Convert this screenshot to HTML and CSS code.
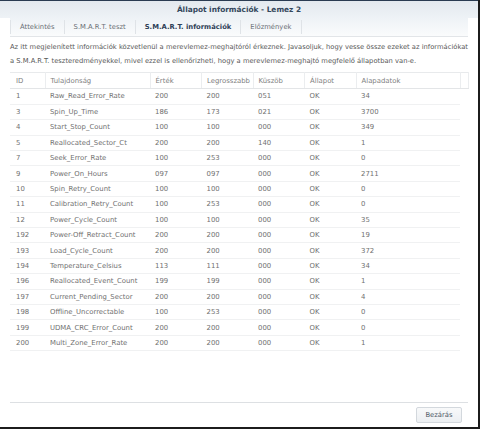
FILE: index.html
```html
<!DOCTYPE html>
<html lang="hu">
<head>
    <meta charset="UTF-8">
    <title>Állapot információk - Lemez 2</title>
    <link rel="stylesheet" href="styles.css">
</head>
<body>
    <div class="window">
        <div class="title-bar">Állapot információk - Lemez 2</div>

        <div class="tabs">
            <span class="tab">Áttekintés</span>
            <span class="tab">S.M.A.R.T. teszt</span>
            <span class="tab active">S.M.A.R.T. információk</span>
            <span class="tab">Előzmények</span>
        </div>

        <div class="content">
            <p class="intro">Az itt megjelenített információk közvetlenül a merevlemez-meghajtóról érkeznek. Javasoljuk, hogy vesse össze ezeket az információkat<br>a S.M.A.R.T. teszteredményekkel, mivel ezzel is ellenőrizheti, hogy a merevlemez-meghajtó megfelelő állapotban van-e.</p>

            <div class="grid">
                <table class="grid-head">
                    <colgroup>
                        <col class="c-id"><col class="c-name"><col class="c-num"><col class="c-num">
                        <col class="c-num"><col class="c-num"><col class="c-raw"><col class="c-scroll">
                    </colgroup>
                    <tr>
                        <th>ID</th><th>Tulajdonság</th><th>Érték</th><th>Legrosszabb</th>
                        <th>Küszöb</th><th>Állapot</th><th>Alapadatok</th><th></th>
                    </tr>
                </table>
                <div class="grid-body">
                    <table class="rows">
                        <colgroup>
                            <col class="c-id"><col class="c-name"><col class="c-num"><col class="c-num">
                            <col class="c-num"><col class="c-num"><col class="c-raw">
                        </colgroup>
                        <tbody id="rows"></tbody>
                    </table>
                </div>
            </div>
        </div>

        <div class="footer">
            <button class="close-btn">Bezárás</button>
        </div>
    </div>

    <script>
        const attrs = [
            [1, 'Raw_Read_Error_Rate', '200', '200', '051', 34],
            [3, 'Spin_Up_Time', '186', '173', '021', 3700],
            [4, 'Start_Stop_Count', '100', '100', '000', 349],
            [5, 'Reallocated_Sector_Ct', '200', '200', '140', 1],
            [7, 'Seek_Error_Rate', '100', '253', '000', 0],
            [9, 'Power_On_Hours', '097', '097', '000', 2711],
            [10, 'Spin_Retry_Count', '100', '100', '000', 0],
            [11, 'Calibration_Retry_Count', '100', '253', '000', 0],
            [12, 'Power_Cycle_Count', '100', '100', '000', 35],
            [192, 'Power-Off_Retract_Count', '200', '200', '000', 19],
            [193, 'Load_Cycle_Count', '200', '200', '000', 372],
            [194, 'Temperature_Celsius', '113', '111', '000', 34],
            [196, 'Reallocated_Event_Count', '199', '199', '000', 1],
            [197, 'Current_Pending_Sector', '200', '200', '000', 4],
            [198, 'Offline_Uncorrectable', '100', '253', '000', 0],
            [199, 'UDMA_CRC_Error_Count', '200', '200', '000', 0],
            [200, 'Multi_Zone_Error_Rate', '200', '200', '000', 1]
        ];

        const tbody = document.getElementById('rows');
        attrs.forEach(function(a) {
            const tr = document.createElement('tr');
            const cells = [a[0], a[1], a[2], a[3], a[4], 'OK', a[5]];
            cells.forEach(function(value) {
                const td = document.createElement('td');
                td.textContent = value;
                tr.appendChild(td);
            });
            tbody.appendChild(tr);
        });
    </script>
</body>
</html>
```

FILE: styles.css
```css
body {
    margin: 0;
    background-color: #1c1c1c;
    font-family: 'DejaVu Sans', Verdana, sans-serif;
    font-size: 6.9px;
    color: #707070;
}

.window {
    width: 478px;
    height: 427px;
    background-color: #fff;
    border-top: 1px solid #2a3b52;
    box-sizing: border-box;
    display: flex;
    flex-direction: column;
}

.title-bar {
    height: 17px;
    line-height: 18px;
    text-align: center;
    font-weight: bold;
    font-size: 7.4px;
    color: #34475c;
    background: linear-gradient(#e3e9ef, #eef2f6);
}

.tabs {
    height: 18px;
    margin: 0 10px;
    display: flex;
    align-items: center;
    border-bottom: 1px solid #e2e5e8;
    background: linear-gradient(#eef2f6, #fafbfc);
}

.tab {
    padding: 0 9px;
    border-left: 1px solid #dfe3e7;
    line-height: 14px;
    color: #6a6f75;
    font-size: 6.8px;
}

.tab:last-child {
    border-right: 1px solid #dfe3e7;
}

.tab.active {
    font-weight: bold;
    color: #2f4157;
}

.content {
    flex: 1;
    padding: 4px 10px 0 10px;
    display: flex;
    flex-direction: column;
}

.intro {
    margin: 0 0 4px 0;
    font-size: 6.75px;
    line-height: 13.5px;
    white-space: nowrap;
    color: #585858;
}

.grid {
    flex: 1;
    border-bottom: 1px solid #dde0e3;
    display: flex;
    flex-direction: column;
}

table {
    width: 458px;
    border-collapse: collapse;
    table-layout: fixed;
}

.rows {
    width: 450px;
}

.c-id { width: 35px; }
.c-name { width: 105px; }
.c-num { width: 51.5px; }
.c-raw { width: 104px; }
.c-scroll { width: 8px; }

th {
    height: 15px;
    padding: 0 0 0 5px;
    text-align: left;
    font-weight: normal;
    color: #808080;
    border-top: 1px solid #e8eaec;
    border-bottom: 1px solid #e3e5e7;
    border-right: 1px solid #ebedef;
    white-space: nowrap;
    overflow: hidden;
}

th:first-child {
    padding-left: 6px;
}

td {
    height: 15.4px;
    padding: 0 0 0 5px;
    border-bottom: 1px solid #f0f1f2;
    white-space: nowrap;
    box-sizing: border-box;
}

td:first-child {
    padding-left: 6px;
}

.footer {
    height: 24px;
    padding: 0 16px 0 10px;
    display: flex;
    justify-content: flex-end;
    align-items: center;
}

.close-btn {
    width: 46px;
    height: 16px;
    padding: 0;
    font-family: inherit;
    font-size: 6.8px;
    color: #4f5a66;
    background: linear-gradient(#f8f9fa, #eceff2);
    border: 1px solid #d3d8dd;
    border-radius: 2px;
}
```
